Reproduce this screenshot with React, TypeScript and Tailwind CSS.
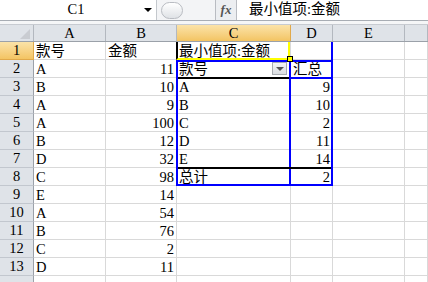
import React from "react";

const FONT = "font-['Liberation_Serif','Noto_Sans_CJK_SC',serif]";
const WC = ["w-[34px]", "w-[72px]", "w-[71px]", "w-[114px]", "w-[42px]", "w-[72px]", "w-[23px]"];

type Cell = { t?: string; r?: boolean; dd?: boolean };

const data: Cell[][] = [
  [{ t: "款号" }, { t: "金额" }, { t: "最小值项:金额" }, {}],
  [{ t: "A" }, { t: "11", r: true }, { t: "款号", dd: true }, { t: "汇总" }],
  [{ t: "B" }, { t: "10", r: true }, { t: "A" }, { t: "9", r: true }],
  [{ t: "A" }, { t: "9", r: true }, { t: "B" }, { t: "10", r: true }],
  [{ t: "A" }, { t: "100", r: true }, { t: "C" }, { t: "2", r: true }],
  [{ t: "B" }, { t: "12", r: true }, { t: "D" }, { t: "11", r: true }],
  [{ t: "D" }, { t: "32", r: true }, { t: "E" }, { t: "14", r: true }],
  [{ t: "C" }, { t: "98", r: true }, { t: "总计" }, { t: "2", r: true }],
  [{ t: "E" }, { t: "14", r: true }],
  [{ t: "A" }, { t: "54", r: true }],
  [{ t: "B" }, { t: "76", r: true }],
  [{ t: "C" }, { t: "2", r: true }],
  [{ t: "D" }, { t: "11", r: true }],
  [],
];

const SEL_HDR = "border-[#e1a94a] bg-gradient-to-b from-[#fbe3a8] to-[#f3c462]";

export default function App() {
  return (
    <div className={`w-[428px] h-[282px] overflow-hidden bg-white text-black ${FONT}`}>
      {/* formula bar */}
      <div className="flex h-[21px] border-b border-[#a8adb4] bg-white">
        <div className="flex w-[157px] items-center border-r border-[#c4c8cd] text-[14.5px]">
          <span className="flex-1 pl-[8px] text-center">C1</span>
          <span className="mr-[4px] h-0 w-0 border-x-[4px] border-t-[4px] border-x-transparent border-t-black" />
        </div>
        <div className="flex w-[58px] items-center bg-[#f3f4f6] pl-[4px]">
          <div className="h-[17px] w-[22px] rounded-full border border-[#b9bcc2] bg-gradient-to-b from-[#ffffff] to-[#dfe2e6]" />
        </div>
        <div className="flex w-[22px] items-center justify-center border-x border-[#b9bcc2] bg-[#eceef1] text-[13px] font-bold italic text-[#555]">
          fx
        </div>
        <div className="flex flex-1 items-center pl-[12px] text-[14.5px]">最小值项:金额</div>
      </div>
      <div className="h-[4px] border-b border-[#c7cbd1] bg-[#f5f6f7]" />
      {/* column headers */}
      <div className="flex h-[17px] border-b border-[#9ba1a9] bg-[#dfe3e8] text-[14.5px] leading-[16px]">
        <div className={`flex items-end justify-end p-[2px] pr-[3px] ${WC[0]} border-r border-[#b3b8bf]`}>
          <span className="h-0 w-0 border-b-[10px] border-l-[10px] border-l-transparent border-b-[#c9ccd1]" />
        </div>
        {["A", "B", "C", "D", "E", ""].map((h, i) => (
          <div
            key={i}
            className={`${WC[i + 1]} border-r text-center ${h === "C" ? SEL_HDR : "border-[#b3b8bf]"}`}
          >
            {h}
          </div>
        ))}
      </div>
      {/* body */}
      <div className="relative">
        {data.map((row, ri) => (
          <div key={ri} className="flex h-[18px] text-[14.5px] leading-[17px]">
            <div
              className={`${WC[0]} border-b border-r text-center ${
                ri === 0 ? SEL_HDR : "border-b-[#c2c7ce] border-r-[#9ba1a9] bg-[#dfe3e8]"
              }`}
            >
              {ri < 13 ? ri + 1 : ""}
            </div>
            {[0, 1, 2, 3, 4, 5].map((ci) => {
              const c = row[ci] || {};
              const just = c.dd ? "justify-between" : c.r ? "justify-end" : "justify-start";
              return (
                <div
                  key={ci}
                  className={`${WC[ci + 1]} flex items-center overflow-visible whitespace-nowrap border-b border-r border-[#d9d9d9] px-[2px] ${just}`}
                >
                  {c.t && <span className="pt-[1px]">{c.t}</span>}
                  {c.dd && (
                    <span className="mr-[1px] flex h-[13px] w-[15px] items-center justify-center border border-[#a7abb0] bg-gradient-to-b from-[#f4f5f6] to-[#dadde1]">
                      <span className="h-0 w-0 border-x-[4px] border-t-[4px] border-x-transparent border-t-[#555]" />
                    </span>
                  )}
                </div>
              );
            })}
          </div>
        ))}
        {/* pivot table outline (overlay) */}
        <div className="absolute left-[176px] top-[18px] h-[126px] w-[157px] border-2 border-[#0000ff]" />
        <div className="absolute left-[331px] top-0 h-[18px] w-[2px] bg-[#0000ff]" />
        <div className="absolute left-[289px] top-[18px] h-[126px] w-[2px] bg-[#0000ff]" />
        <div className="absolute left-[178px] top-[35px] h-[2px] w-[111px] bg-black" />
        <div className="absolute left-[291px] top-[35px] h-[2px] w-[40px] bg-[#0000ff]" />
        <div className="absolute left-[178px] top-[125px] h-[2px] w-[153px] bg-black" />
        {/* active cell C1 (overlay) */}
        <div className="absolute left-[176px] top-0 h-[18px] w-[114px] border-b-2 border-l-2 border-r-2 border-b-[#ffff00] border-l-black border-r-[#ffff00]" />
        <div className="absolute left-[287px] top-[14px] h-[6px] w-[6px] border border-black bg-[#ffff00]" />
      </div>
    </div>
  );
}
